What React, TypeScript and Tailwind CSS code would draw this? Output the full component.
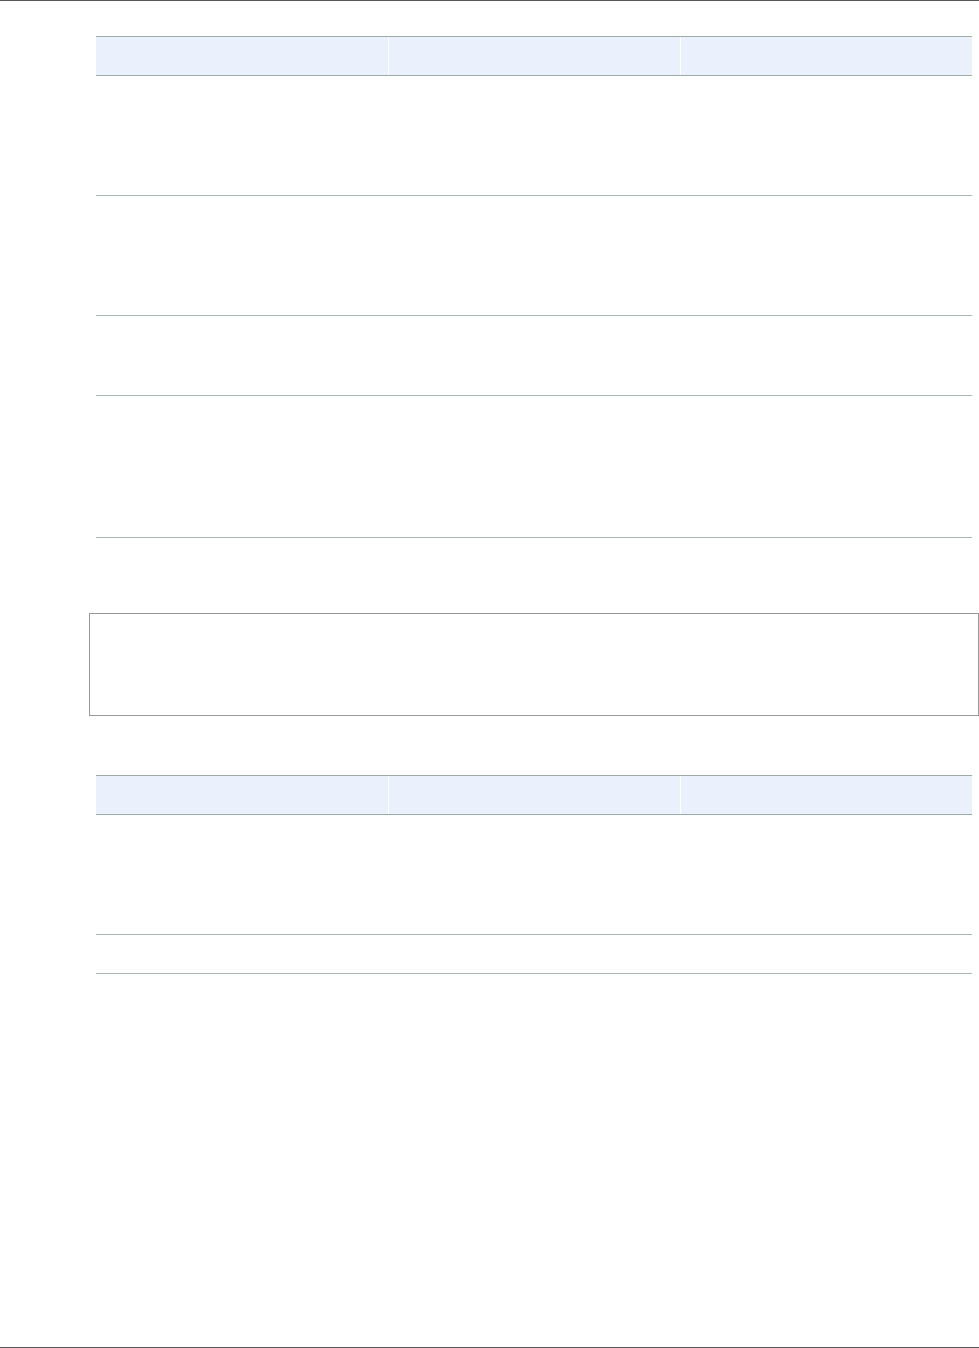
const tableOne = [119, 119, 79, 141];
const tableTwo = [119, 38];

function HeaderRow() {
  return (
    <div className="grid grid-cols-3 border-t border-b border-[#9aaba8] bg-[#eaf1fc] h-[40px]">
      <div />
      <div className="border-l border-white" />
      <div className="border-l border-white" />
    </div>
  );
}

function Table({ rows }: { rows: number[] }) {
  return (
    <div className="ml-[96px] mr-[7px]">
      <HeaderRow />
      {rows.map((h, i) => (
        <div key={i} className="grid grid-cols-3 border-b border-[#a9b7b5]" style={{ height: h + 1 }}>
          <div />
          <div />
          <div />
        </div>
      ))}
    </div>
  );
}

export default function App() {
  return (
    <main className="flex flex-col min-h-[1348px] bg-white border-t border-b border-[#555555] font-['Liberation_Sans',sans-serif]">
      <div className="mt-[35px]">
        <Table rows={tableOne} />
      </div>
      <div className="mt-[75px] ml-[89px] h-[103px] border border-[#999999]" />
      <div className="mt-[59px]">
        <Table rows={tableTwo} />
      </div>
      <div className="grow" />
    </main>
  );
}
